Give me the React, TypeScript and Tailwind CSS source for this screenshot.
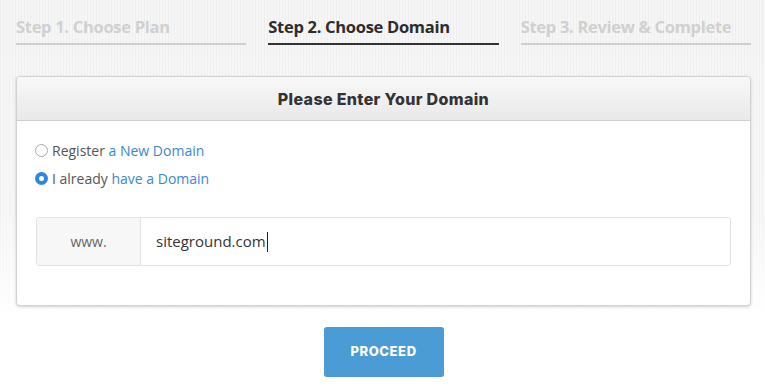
import React from "react";

export default function App() {
  const steps = [
    { label: "Step 1. Choose Plan", active: false },
    { label: "Step 2. Choose Domain", active: true },
    { label: "Step 3. Review & Complete", active: false },
  ];
  return (
    <div className="w-[765px] h-[388px] bg-white overflow-hidden">
      <div className="h-[388px] pl-[16px] pr-[14px] bg-[linear-gradient(to_bottom,rgba(255,255,255,0)_0%,rgba(255,255,255,0.2)_55%,#ffffff_82%),repeating-linear-gradient(90deg,#eeeeee_0px,#eeeeee_1px,#f6f6f6_1px,#f6f6f6_3px)]">
        <div className="grid grid-cols-3 gap-x-[22px] font-['Open_Sans',sans-serif]">
          {steps.map((s) => (
            <div
              key={s.label}
              className={`pt-[16px] pb-[5px] border-b-2 ${
                s.active ? "border-[#333333] text-[#2c2c2c]" : "border-[#cfcfcf] text-[#d0d0d0]"
              }`}
            >
              <div className="text-[16.5px] leading-[22px] font-bold tracking-[-0.3px]">{s.label}</div>
            </div>
          ))}
        </div>

        <div className="mt-[31px] border border-[#d2d2d2] rounded-[4px] bg-white shadow-[0_1px_3px_rgba(0,0,0,0.18)]">
          <div className="h-[44px] flex items-center justify-center rounded-t-[4px] border-b border-[#cfcfcf] bg-[linear-gradient(to_bottom,#f8f8f8,#e9e9e9)]">
            <span className="font-['Inter',sans-serif] font-extrabold text-[16px] tracking-[0.35px] text-[#333333]">
              Please Enter Your Domain
            </span>
          </div>
          <div className="px-[18px] pt-[19px] pb-[39px] font-['Open_Sans',sans-serif]">
            <div className="flex items-center h-[20px] text-[14px] text-[#555555]">
              <span className="w-[13px] h-[13px] rounded-full border border-[#a9a9a9] bg-white mr-[4px] mt-[1px]" />
              <span>Register&nbsp;</span>
              <span className="text-[#3b87d2]">a New Domain</span>
            </div>
            <div className="flex items-center h-[20px] mt-[8px] text-[14px] text-[#555555]">
              <span className="w-[13px] h-[13px] rounded-full bg-[#2f84e6] mr-[4px] mt-[1px] flex items-center justify-center">
                <span className="w-[5px] h-[5px] rounded-full bg-white" />
              </span>
              <span>I already&nbsp;</span>
              <span className="text-[#3b87d2]">have a Domain</span>
            </div>

            <div className="mt-[29px] mx-[1px] flex h-[49px] border border-[#e2e2e2] rounded-[3px]">
              <div className="w-[104px] flex items-center justify-center bg-[#f7f7f7] border-r border-[#e2e2e2] text-[14px] text-[#666666] rounded-l-[3px]">
                www.
              </div>
              <div className="flex-1 flex items-center pl-[15px] text-[15px] text-[#333333]">
                <span>siteground.com</span>
                <span className="w-[1px] h-[20px] bg-[#222222] ml-[1px]" />
              </div>
            </div>
          </div>
        </div>

        <div className="flex justify-center mt-[21px]">
          <div className="w-[120px] h-[50px] rounded-[3px] bg-[#4b9bd4] flex items-center justify-center font-['Inter',sans-serif] font-extrabold text-[13px] text-white tracking-[0.6px]">
            PROCEED
          </div>
        </div>
      </div>
    </div>
  );
}
